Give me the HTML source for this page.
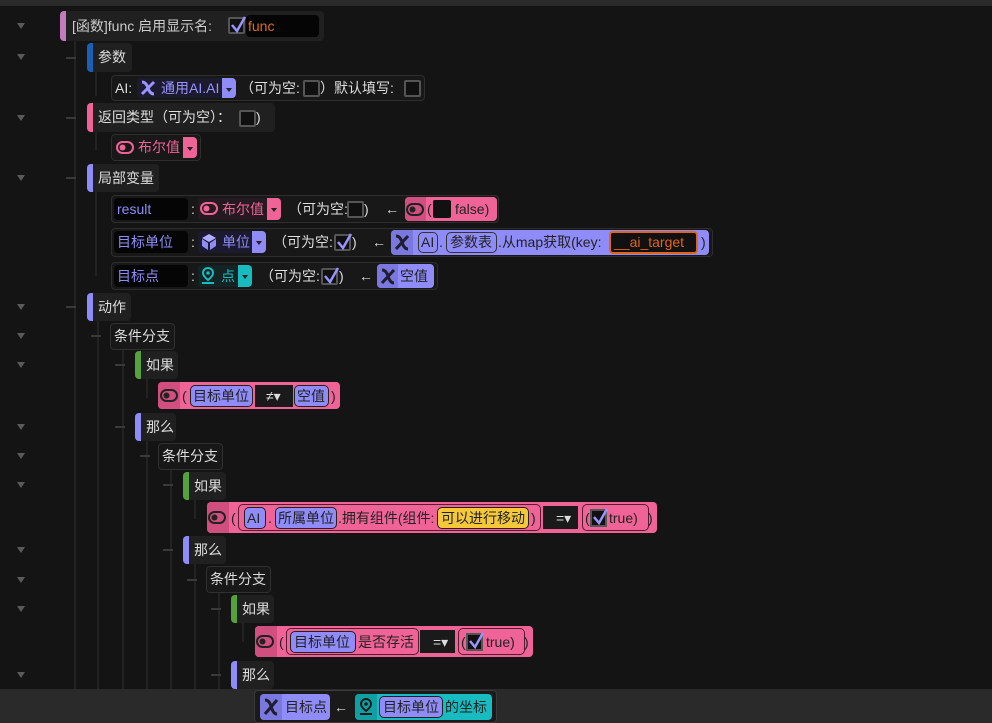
<!DOCTYPE html>
<html><head><meta charset="utf-8"><style>
*{margin:0;padding:0;box-sizing:border-box}
body{width:992px;height:723px;background:#141414;overflow:hidden;position:relative;font-family:"Liberation Sans","Noto Sans CJK SC",sans-serif;font-size:14px;color:#ddd}
.a{position:absolute}
.t{position:absolute;white-space:nowrap;line-height:20px;font-size:14px}
.blk{position:absolute;background:#202020;border-radius:4px}
.rb{position:absolute;background:#181818;border:1px solid #2e2e2e;border-radius:4px}
.bar{position:absolute;width:6px;border-radius:4px 0 0 4px}
.cb{position:absolute;width:17px;height:17px;background:#101010;border:2px solid #555;border-radius:2px}
.inp{position:absolute;background:#050505;border-radius:4px}
.tri{position:absolute;width:0;height:0;border-left:4px solid transparent;border-right:4px solid transparent;border-top:6px solid #5a5a5a}
.hl{position:absolute;height:2px;background:#3a3a3a;width:10px}
.vl{position:absolute;width:2px;background:#222}
.pill{position:absolute;border:1.5px solid #222;border-radius:5px;background:#8f8cf8;color:#222}
.pk{background:#ef6396}
.pu{background:#8f8cf8}
.tl{background:#16bcc0}
.dd{position:absolute;border-radius:0 4px 4px 0}
.dd:after{content:"";position:absolute;left:4px;top:10px;border-left:3px solid transparent;border-right:3px solid transparent;border-top:4px solid #222}
</style></head><body>
<div class="a" style="left:0;top:0;width:992px;height:6px;background:#2a2a2a"></div>

<div class="vl" style="left:74px;top:40px;height:650px"></div>
<div class="vl" style="left:95px;top:71px;height:25px"></div>
<div class="vl" style="left:95px;top:130px;height:20px"></div>
<div class="vl" style="left:95px;top:191px;height:85px"></div>
<div class="vl" style="left:97px;top:320px;height:370px"></div>
<div class="vl" style="left:122px;top:349px;height:341px"></div>
<div class="vl" style="left:146px;top:378px;height:20px"></div>
<div class="vl" style="left:146px;top:440px;height:250px"></div>
<div class="vl" style="left:170px;top:469px;height:221px"></div>
<div class="vl" style="left:194px;top:499px;height:20px"></div>
<div class="vl" style="left:194px;top:563px;height:127px"></div>
<div class="vl" style="left:218px;top:592px;height:98px"></div>
<div class="vl" style="left:242px;top:622px;height:20px"></div>

<div class="tri" style="left:17px;top:23px"></div>
<div class="tri" style="left:17px;top:54px"></div>
<div class="tri" style="left:17px;top:115px"></div>
<div class="tri" style="left:17px;top:175px"></div>
<div class="tri" style="left:17px;top:304px"></div>
<div class="tri" style="left:17px;top:333px"></div>
<div class="tri" style="left:17px;top:362px"></div>
<div class="tri" style="left:17px;top:424px"></div>
<div class="tri" style="left:17px;top:453px"></div>
<div class="tri" style="left:17px;top:482px"></div>
<div class="tri" style="left:17px;top:547px"></div>
<div class="tri" style="left:17px;top:577px"></div>
<div class="tri" style="left:17px;top:606px"></div>
<div class="tri" style="left:17px;top:672px"></div>

<div class="hl" style="left:66px;top:57px"></div>
<div class="hl" style="left:66px;top:117px"></div>
<div class="hl" style="left:66px;top:177px"></div>
<div class="hl" style="left:66px;top:306px"></div>
<div class="hl" style="left:91px;top:335px"></div>
<div class="hl" style="left:115px;top:364px"></div>
<div class="hl" style="left:115px;top:426px"></div>
<div class="hl" style="left:140px;top:455px"></div>
<div class="hl" style="left:163px;top:484px"></div>
<div class="hl" style="left:163px;top:549px"></div>
<div class="hl" style="left:187px;top:579px"></div>
<div class="hl" style="left:211px;top:608px"></div>
<div class="hl" style="left:211px;top:674px"></div>

<div class="blk" style="left:60px;top:11px;width:264px;height:30px"></div>
<div class="bar" style="left:60px;top:11px;height:30px;background:#c27bbd"></div>
<div class="t" style="left:72px;top:16px;color:#ccc">[函数]func 启用显示名:</div>
<div class="cb" style="left:228px;top:17px"></div>
<svg class="a" style="left:229px;top:14px" width="18" height="20"><path d="M3 11 L8 17 L16 3" stroke="#9a94ff" stroke-width="2.5" fill="none"/></svg>
<div class="inp" style="left:246px;top:15px;width:73px;height:22px"></div>
<div class="t" style="left:248px;top:16px;color:#e06a20">func</div>

<div class="blk" style="left:87px;top:43px;width:45px;height:29px"></div>
<div class="bar" style="left:87px;top:43px;height:29px;background:#1d5fb5"></div>
<div class="t" style="left:98px;top:47px">参数</div>

<div class="rb" style="left:111px;top:75px;width:314px;height:26px"></div>
<div class="t" style="left:115px;top:78px">AI:</div>
<div class="a" style="left:137px;top:78px;width:85px;height:20px;background:#1c1a2e;border-radius:3px"></div>
<svg class="a" style="left:140px;top:80px" width="16" height="16"><path d="M2 2 Q6 2 8 8 Q10 14 14 14 M14 2 L2 14" stroke="#9a94ff" stroke-width="3" fill="none"/></svg>
<div class="t" style="left:161px;top:78px;color:#9a94ff">通用AI.AI</div>
<div class="dd pu" style="left:222px;top:78px;width:14px;height:20px"></div>
<div class="t" style="left:240px;top:78px">（可为空:</div>
<div class="cb" style="left:303px;top:80px"></div>
<div class="t" style="left:320px;top:78px">）默认填写:</div>
<div class="cb" style="left:404px;top:80px"></div>

<div class="blk" style="left:87px;top:103px;width:188px;height:29px"></div>
<div class="bar" style="left:87px;top:103px;height:29px;background:#ef6396"></div>
<div class="t" style="left:98px;top:107px">返回类型（可为空）：</div>
<div class="cb" style="left:239px;top:110px"></div>
<div class="t" style="left:256px;top:107px">)</div>

<div class="rb" style="left:111px;top:134px;width:90px;height:27px"></div>
<svg class="a" style="left:115px;top:139px" width="20" height="17"><rect x="2" y="3" width="16" height="11" rx="5.5" stroke="#ef6396" stroke-width="2" fill="none"/><circle cx="7.5" cy="8.5" r="3" fill="#ef6396"/></svg>
<div class="t" style="left:138px;top:137px;color:#ef6396">布尔值</div>
<div class="dd pk" style="left:183px;top:137px;width:14px;height:21px"></div>

<div class="blk" style="left:87px;top:164px;width:72px;height:28px"></div>
<div class="bar" style="left:87px;top:164px;height:28px;background:#8f8cf8"></div>
<div class="t" style="left:98px;top:168px">局部变量</div>

<div class="rb" style="left:111px;top:195px;width:388px;height:28px"></div>
<div class="inp" style="left:114px;top:198px;width:74px;height:22px"></div>
<div class="t" style="left:117px;top:199px;color:#8f8cf8">result</div>
<div class="t" style="left:191px;top:199px">:</div>
<div class="a" style="left:198px;top:198px;width:70px;height:22px;background:#241a20;border-radius:3px"></div>
<svg class="a" style="left:199px;top:200px" width="20" height="17"><rect x="2" y="3" width="16" height="11" rx="5.5" stroke="#ef6396" stroke-width="2" fill="none"/><circle cx="7.5" cy="8.5" r="3" fill="#ef6396"/></svg>
<div class="t" style="left:222px;top:199px;color:#ef6396">布尔值</div>
<div class="dd pk" style="left:267px;top:198px;width:14px;height:22px"></div>
<div class="t" style="left:288px;top:199px">（可为空:</div>
<div class="cb" style="left:347px;top:201px"></div>
<div class="t" style="left:364px;top:199px">)</div>
<div class="t" style="left:385px;top:199px">←</div>
<div class="a pk" style="left:405px;top:197px;width:92px;height:24px;border-radius:4px"></div>
<div class="a" style="left:405px;top:197px;width:21px;height:24px;background:#d04f7e;border-radius:4px 0 0 4px"></div>
<svg class="a" style="left:405px;top:201px" width="20" height="17"><rect x="2" y="3" width="16" height="11" rx="5.5" stroke="#222" stroke-width="2" fill="none"/><circle cx="7.5" cy="8.5" r="3" fill="#222"/></svg>
<div class="t" style="left:427px;top:199px;color:#222">(</div>
<div class="a" style="left:433px;top:200px;width:18px;height:18px;background:#111;border-radius:2px"></div>
<div class="t" style="left:455px;top:199px;color:#222">false)</div>

<div class="rb" style="left:111px;top:228px;width:602px;height:29px"></div>
<div class="inp" style="left:114px;top:231px;width:74px;height:22px"></div>
<div class="t" style="left:117px;top:232px;color:#8f8cf8">目标单位</div>
<div class="t" style="left:191px;top:232px">:</div>
<div class="a" style="left:198px;top:231px;width:54px;height:22px;background:#1c1a2e;border-radius:3px"></div>
<svg class="a" style="left:200px;top:233px" width="18" height="18"><path d="M9 1 L16 5 L9 9 L2 5Z" fill="#b0adff"/><path d="M2 6 L8 10 L8 17 L2 13Z M16 6 L10 10 L10 17 L16 13Z" fill="#8f8cf8"/></svg>
<div class="t" style="left:222px;top:232px;color:#8f8cf8">单位</div>
<div class="dd pu" style="left:252px;top:231px;width:14px;height:22px"></div>
<div class="t" style="left:273px;top:232px">（可为空:</div>
<div class="cb" style="left:334px;top:234px"></div>
<svg class="a" style="left:335px;top:231px" width="18" height="20"><path d="M3 11 L8 17 L16 3" stroke="#9a94ff" stroke-width="2.5" fill="none"/></svg>
<div class="t" style="left:352px;top:232px">)</div>
<div class="t" style="left:372px;top:232px">←</div>
<div class="a pu" style="left:391px;top:230px;width:318px;height:25px;border-radius:4px"></div>
<div class="a" style="left:391px;top:230px;width:22px;height:25px;background:#7a77de;border-radius:4px 0 0 4px"></div>
<svg class="a" style="left:394px;top:234px" width="16" height="17"><path d="M2 2 Q6 2 8 8 Q10 15 14 15 M14 2 L2 15" stroke="#1e1e2e" stroke-width="3" fill="none"/></svg>
<div class="pill" style="left:418px;top:232px;width:20px;height:21px;border-color:#333"></div>
<div class="t" style="left:421px;top:232px;color:#222">AI</div>
<div class="t" style="left:439px;top:232px;color:#222">.</div>
<div class="pill" style="left:446px;top:232px;width:51px;height:21px;border-color:#333"></div>
<div class="t" style="left:450px;top:232px;color:#222">参数表</div>
<div class="t" style="left:498px;top:232px;color:#222">.从map获取(key:</div>
<div class="a" style="left:609px;top:231px;width:89px;height:23px;background:#111;border:2px solid #e0641c;border-radius:4px"></div>
<div class="t" style="left:614px;top:232px;color:#e0641c">__ai_target</div>
<div class="t" style="left:701px;top:232px;color:#222">)</div>

<div class="rb" style="left:111px;top:262px;width:327px;height:28px"></div>
<div class="inp" style="left:114px;top:265px;width:74px;height:22px"></div>
<div class="t" style="left:117px;top:266px;color:#8f8cf8">目标点</div>
<div class="t" style="left:191px;top:266px">:</div>
<div class="a" style="left:198px;top:265px;width:40px;height:22px;background:#142424;border-radius:3px"></div>
<svg class="a" style="left:200px;top:266px" width="16" height="20"><path d="M8 2 A5 5 0 0 1 13 7 Q13 10 8 14 Q3 10 3 7 A5 5 0 0 1 8 2Z" fill="none" stroke="#16bcc0" stroke-width="2"/><circle cx="8" cy="7" r="1.8" fill="#16bcc0"/><path d="M2 17 H14" stroke="#16bcc0" stroke-width="2"/></svg>
<div class="t" style="left:221px;top:266px;color:#16bcc0">点</div>
<div class="dd tl" style="left:238px;top:265px;width:14px;height:22px"></div>
<div class="t" style="left:260px;top:266px">（可为空:</div>
<div class="cb" style="left:321px;top:268px"></div>
<svg class="a" style="left:322px;top:265px" width="18" height="20"><path d="M3 11 L8 17 L16 3" stroke="#9a94ff" stroke-width="2.5" fill="none"/></svg>
<div class="t" style="left:339px;top:266px">)</div>
<div class="t" style="left:359px;top:266px">←</div>
<div class="a pu" style="left:377px;top:264px;width:57px;height:24px;border-radius:4px"></div>
<div class="a" style="left:377px;top:264px;width:21px;height:24px;background:#7a77de;border-radius:4px 0 0 4px"></div>
<svg class="a" style="left:380px;top:268px" width="16" height="17"><path d="M2 2 Q6 2 8 8 Q10 15 14 15 M14 2 L2 15" stroke="#1e1e2e" stroke-width="3" fill="none"/></svg>
<div class="t" style="left:400px;top:266px;color:#222">空值</div>

<div class="blk" style="left:87px;top:293px;width:44px;height:28px"></div>
<div class="bar" style="left:87px;top:293px;height:28px;background:#8f8cf8"></div>
<div class="t" style="left:98px;top:297px">动作</div>

<div class="blk" style="left:110px;top:323px;width:65px;height:27px;background:#181818;border:1px solid #303030"></div>
<div class="t" style="left:114px;top:326px">条件分支</div>

<div class="blk" style="left:135px;top:351px;width:43px;height:28px"></div>
<div class="bar" style="left:135px;top:351px;height:28px;background:#56a23a"></div>
<div class="t" style="left:146px;top:355px">如果</div>

<div class="a pk" style="left:158px;top:382px;width:182px;height:27px;border-radius:4px"></div>
<div class="a" style="left:158px;top:382px;width:22px;height:27px;background:#d04f7e;border-radius:4px 0 0 4px"></div>
<svg class="a" style="left:159px;top:387px" width="20" height="17"><rect x="2" y="3" width="16" height="11" rx="5.5" stroke="#222" stroke-width="2" fill="none"/><circle cx="7.5" cy="8.5" r="3" fill="#222"/></svg>
<div class="t" style="left:182px;top:386px;color:#222">(</div>
<div class="pill" style="left:190px;top:385px;width:63px;height:22px"></div>
<div class="t" style="left:193px;top:386px;color:#222">目标单位</div>
<div class="a" style="left:255px;top:385px;width:38px;height:22px;background:#1a1a1a"></div>
<div class="t" style="left:266px;top:386px;color:#ddd">≠▾</div>
<div class="pill" style="left:294px;top:385px;width:35px;height:22px"></div>
<div class="t" style="left:297px;top:386px;color:#222">空值</div>
<div class="t" style="left:331px;top:386px;color:#222">)</div>

<div class="blk" style="left:135px;top:413px;width:41px;height:28px"></div>
<div class="bar" style="left:135px;top:413px;height:28px;background:#8f8cf8"></div>
<div class="t" style="left:146px;top:417px">那么</div>

<div class="blk" style="left:158px;top:443px;width:65px;height:27px;background:#181818;border:1px solid #303030"></div>
<div class="t" style="left:162px;top:446px">条件分支</div>

<div class="blk" style="left:183px;top:472px;width:43px;height:28px"></div>
<div class="bar" style="left:183px;top:472px;height:28px;background:#56a23a"></div>
<div class="t" style="left:194px;top:476px">如果</div>

<div class="a pk" style="left:207px;top:502px;width:450px;height:31px;border-radius:4px"></div>
<div class="a" style="left:207px;top:502px;width:22px;height:31px;background:#d04f7e;border-radius:4px 0 0 4px"></div>
<svg class="a" style="left:207px;top:509px" width="20" height="17"><rect x="2" y="3" width="16" height="11" rx="5.5" stroke="#222" stroke-width="2" fill="none"/><circle cx="7.5" cy="8.5" r="3" fill="#222"/></svg>
<div class="t" style="left:231px;top:508px;color:#222">(</div>
<div class="a" style="left:238px;top:504px;width:303px;height:27px;border:1.5px solid #5a1a30;border-radius:5px"></div>
<div class="pill" style="left:244px;top:507px;width:22px;height:22px"></div>
<div class="t" style="left:247px;top:508px;color:#222">AI</div>
<div class="t" style="left:268px;top:508px;color:#222">.</div>
<div class="pill" style="left:275px;top:507px;width:62px;height:22px"></div>
<div class="t" style="left:278px;top:508px;color:#222">所属单位</div>
<div class="t" style="left:338px;top:508px;color:#222">.拥有组件(组件:</div>
<div class="pill" style="left:437px;top:507px;width:92px;height:22px;background:#f5c83a"></div>
<div class="t" style="left:441px;top:508px;color:#222">可以进行移动</div>
<div class="t" style="left:531px;top:508px;color:#222">)</div>
<div class="a" style="left:543px;top:506px;width:35px;height:23px;background:#1a1a1a"></div>
<div class="t" style="left:556px;top:508px;color:#ddd">=▾</div>
<div class="a" style="left:582px;top:504px;width:67px;height:27px;border:1.5px solid #5a1a30;border-radius:5px"></div>
<div class="t" style="left:585px;top:508px;color:#222">(</div>
<div class="a" style="left:590px;top:509px;width:17px;height:18px;background:#111;border:2px solid #555"></div>
<svg class="a" style="left:591px;top:506px" width="18" height="20"><path d="M3 11 L8 17 L16 3" stroke="#9a94ff" stroke-width="2.5" fill="none"/></svg>
<div class="t" style="left:609px;top:508px;color:#222">true)</div>
<div class="t" style="left:648px;top:508px;color:#222">)</div>

<div class="blk" style="left:183px;top:536px;width:43px;height:28px"></div>
<div class="bar" style="left:183px;top:536px;height:28px;background:#8f8cf8"></div>
<div class="t" style="left:194px;top:540px">那么</div>

<div class="blk" style="left:206px;top:566px;width:65px;height:27px;background:#181818;border:1px solid #303030"></div>
<div class="t" style="left:210px;top:569px">条件分支</div>

<div class="blk" style="left:231px;top:595px;width:43px;height:28px"></div>
<div class="bar" style="left:231px;top:595px;height:28px;background:#56a23a"></div>
<div class="t" style="left:242px;top:599px">如果</div>

<div class="a pk" style="left:255px;top:626px;width:278px;height:31px;border-radius:4px"></div>
<div class="a" style="left:255px;top:626px;width:22px;height:31px;background:#d04f7e;border-radius:4px 0 0 4px"></div>
<svg class="a" style="left:255px;top:633px" width="20" height="17"><rect x="2" y="3" width="16" height="11" rx="5.5" stroke="#222" stroke-width="2" fill="none"/><circle cx="7.5" cy="8.5" r="3" fill="#222"/></svg>
<div class="t" style="left:279px;top:632px;color:#222">(</div>
<div class="a" style="left:286px;top:628px;width:133px;height:27px;border:1.5px solid #5a1a30;border-radius:5px"></div>
<div class="pill" style="left:290px;top:631px;width:66px;height:22px"></div>
<div class="t" style="left:294px;top:632px;color:#222">目标单位</div>
<div class="t" style="left:358px;top:632px;color:#222">是否存活</div>
<div class="a" style="left:420px;top:630px;width:35px;height:23px;background:#1a1a1a"></div>
<div class="t" style="left:433px;top:632px;color:#ddd">=▾</div>
<div class="a" style="left:458px;top:628px;width:67px;height:27px;border:1.5px solid #5a1a30;border-radius:5px"></div>
<div class="t" style="left:461px;top:632px;color:#222">(</div>
<div class="a" style="left:466px;top:633px;width:17px;height:18px;background:#111;border:2px solid #555"></div>
<svg class="a" style="left:467px;top:630px" width="18" height="20"><path d="M3 11 L8 17 L16 3" stroke="#9a94ff" stroke-width="2.5" fill="none"/></svg>
<div class="t" style="left:486px;top:632px;color:#222">true)</div>
<div class="t" style="left:524px;top:632px;color:#222">)</div>

<div class="blk" style="left:231px;top:661px;width:43px;height:28px"></div>
<div class="bar" style="left:231px;top:661px;height:28px;background:#8f8cf8"></div>
<div class="t" style="left:242px;top:665px">那么</div>

<div class="a" style="left:0;top:689px;width:992px;height:34px;background:#2a2a2a"></div>
<div class="a" style="left:254px;top:690px;width:243px;height:33px;background:#1a1a1a;border:1px solid #3a3a3a;border-radius:4px"></div>
<div class="a pu" style="left:260px;top:694px;width:70px;height:26px;border-radius:4px"></div>
<div class="a" style="left:260px;top:694px;width:22px;height:26px;background:#7a77de;border-radius:4px 0 0 4px"></div>
<svg class="a" style="left:263px;top:698px" width="16" height="18"><path d="M2 2 Q6 2 8 8 Q10 16 14 16 M14 2 L2 16" stroke="#1e1e2e" stroke-width="3" fill="none"/></svg>
<div class="t" style="left:285px;top:697px;color:#222">目标点</div>
<div class="t" style="left:334px;top:697px">←</div>
<div class="a tl" style="left:355px;top:694px;width:137px;height:26px;border-radius:4px"></div>
<div class="a" style="left:355px;top:694px;width:22px;height:26px;background:#10a0a4;border-radius:4px 0 0 4px"></div>
<svg class="a" style="left:358px;top:697px" width="16" height="20"><path d="M8 2 A5 5 0 0 1 13 7 Q13 10 8 14 Q3 10 3 7 A5 5 0 0 1 8 2Z" fill="none" stroke="#1a1a1a" stroke-width="2"/><circle cx="8" cy="7" r="1.8" fill="#1a1a1a"/><path d="M2 17 H14" stroke="#1a1a1a" stroke-width="2"/></svg>
<div class="pill" style="left:379px;top:696px;width:64px;height:22px"></div>
<div class="t" style="left:383px;top:697px;color:#222">目标单位</div>
<div class="t" style="left:445px;top:697px;color:#222">的坐标</div>
</body></html>
